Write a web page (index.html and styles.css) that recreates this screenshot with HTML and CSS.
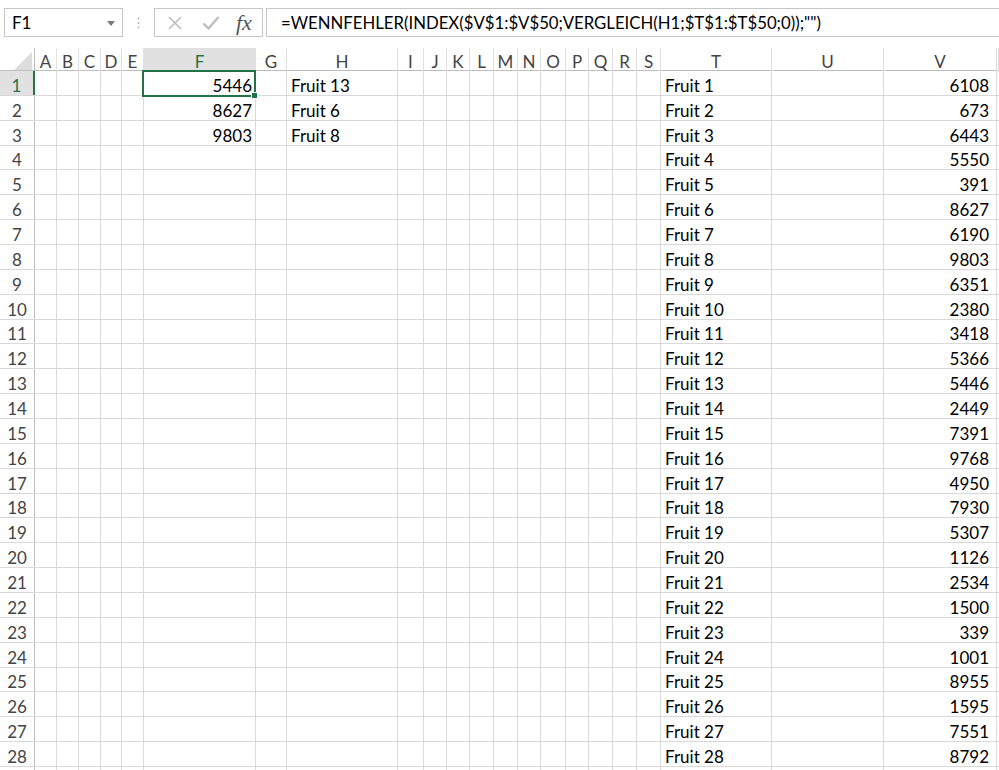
FILE: index.html
```html
<!DOCTYPE html>
<html lang="de">
<head>
<meta charset="utf-8">
<title>Excel</title>
<link rel="stylesheet" href="styles.css">
</head>
<body>
<div class="toolbar">
  <div class="namebox"><span class="nb-text">F1</span><svg class="nb-arrow" width="8" height="5" viewBox="0 0 8 5"><path d="M0 0h8L4 5z" fill="#7a7a7a"/></svg></div>
  <svg class="vdots" width="3" height="12" viewBox="0 0 3 12"><circle cx="1.5" cy="1.5" r="1" fill="#b0b0b0"/><circle cx="1.5" cy="6" r="1" fill="#b0b0b0"/><circle cx="1.5" cy="10.5" r="1" fill="#b0b0b0"/></svg>
  <div class="fxgroup">
    <svg class="ico" width="16" height="16" viewBox="0 0 16 16"><path d="M2 2L14 14M14 2L2 14" stroke="#bdbdbd" stroke-width="1.6" fill="none"/></svg>
    <svg class="ico" width="18" height="16" viewBox="0 0 18 16"><path d="M1.5 8.5L6.5 13.5L16.5 2" stroke="#bdbdbd" stroke-width="2.4" fill="none"/></svg>
    <span class="fx">fx</span>
  </div>
  <div class="formula">=WENNFEHLER(INDEX($V$1:$V$50;VERGLEICH(H1;$T$1:$T$50;0));"")</div>
</div>
<div class="sheet">
  <div class="hdr">
    <span class="corner"><svg width="18" height="18" viewBox="0 0 18 18"><path d="M18 0V18H0z" fill="#dcdcdc"/></svg></span>
    <span>A</span><span>B</span><span>C</span><span>D</span><span>E</span><span class="sel">F</span><span>G</span><span>H</span><span>I</span><span>J</span><span>K</span><span>L</span><span>M</span><span>N</span><span>O</span><span>P</span><span>Q</span><span>R</span><span>S</span><span>T</span><span>U</span><span>V</span><span></span>
  </div>
  <div class="row"><b class="sel">1</b><span></span><span></span><span></span><span></span><span></span><span class="num active">5446</span><span></span><span>Fruit 13</span><span></span><span></span><span></span><span></span><span></span><span></span><span></span><span></span><span></span><span></span><span></span><span>Fruit 1</span><span></span><span class="num v">6108</span><span></span></div>
  <div class="row"><b>2</b><span></span><span></span><span></span><span></span><span></span><span class="num">8627</span><span></span><span>Fruit 6</span><span></span><span></span><span></span><span></span><span></span><span></span><span></span><span></span><span></span><span></span><span></span><span>Fruit 2</span><span></span><span class="num v">673</span><span></span></div>
  <div class="row"><b>3</b><span></span><span></span><span></span><span></span><span></span><span class="num">9803</span><span></span><span>Fruit 8</span><span></span><span></span><span></span><span></span><span></span><span></span><span></span><span></span><span></span><span></span><span></span><span>Fruit 3</span><span></span><span class="num v">6443</span><span></span></div>
  <div class="row"><b>4</b><span></span><span></span><span></span><span></span><span></span><span></span><span></span><span></span><span></span><span></span><span></span><span></span><span></span><span></span><span></span><span></span><span></span><span></span><span></span><span>Fruit 4</span><span></span><span class="num v">5550</span><span></span></div>
  <div class="row"><b>5</b><span></span><span></span><span></span><span></span><span></span><span></span><span></span><span></span><span></span><span></span><span></span><span></span><span></span><span></span><span></span><span></span><span></span><span></span><span></span><span>Fruit 5</span><span></span><span class="num v">391</span><span></span></div>
  <div class="row"><b>6</b><span></span><span></span><span></span><span></span><span></span><span></span><span></span><span></span><span></span><span></span><span></span><span></span><span></span><span></span><span></span><span></span><span></span><span></span><span></span><span>Fruit 6</span><span></span><span class="num v">8627</span><span></span></div>
  <div class="row"><b>7</b><span></span><span></span><span></span><span></span><span></span><span></span><span></span><span></span><span></span><span></span><span></span><span></span><span></span><span></span><span></span><span></span><span></span><span></span><span></span><span>Fruit 7</span><span></span><span class="num v">6190</span><span></span></div>
  <div class="row"><b>8</b><span></span><span></span><span></span><span></span><span></span><span></span><span></span><span></span><span></span><span></span><span></span><span></span><span></span><span></span><span></span><span></span><span></span><span></span><span></span><span>Fruit 8</span><span></span><span class="num v">9803</span><span></span></div>
  <div class="row"><b>9</b><span></span><span></span><span></span><span></span><span></span><span></span><span></span><span></span><span></span><span></span><span></span><span></span><span></span><span></span><span></span><span></span><span></span><span></span><span></span><span>Fruit 9</span><span></span><span class="num v">6351</span><span></span></div>
  <div class="row"><b>10</b><span></span><span></span><span></span><span></span><span></span><span></span><span></span><span></span><span></span><span></span><span></span><span></span><span></span><span></span><span></span><span></span><span></span><span></span><span></span><span>Fruit 10</span><span></span><span class="num v">2380</span><span></span></div>
  <div class="row"><b>11</b><span></span><span></span><span></span><span></span><span></span><span></span><span></span><span></span><span></span><span></span><span></span><span></span><span></span><span></span><span></span><span></span><span></span><span></span><span></span><span>Fruit 11</span><span></span><span class="num v">3418</span><span></span></div>
  <div class="row"><b>12</b><span></span><span></span><span></span><span></span><span></span><span></span><span></span><span></span><span></span><span></span><span></span><span></span><span></span><span></span><span></span><span></span><span></span><span></span><span></span><span>Fruit 12</span><span></span><span class="num v">5366</span><span></span></div>
  <div class="row"><b>13</b><span></span><span></span><span></span><span></span><span></span><span></span><span></span><span></span><span></span><span></span><span></span><span></span><span></span><span></span><span></span><span></span><span></span><span></span><span></span><span>Fruit 13</span><span></span><span class="num v">5446</span><span></span></div>
  <div class="row"><b>14</b><span></span><span></span><span></span><span></span><span></span><span></span><span></span><span></span><span></span><span></span><span></span><span></span><span></span><span></span><span></span><span></span><span></span><span></span><span></span><span>Fruit 14</span><span></span><span class="num v">2449</span><span></span></div>
  <div class="row"><b>15</b><span></span><span></span><span></span><span></span><span></span><span></span><span></span><span></span><span></span><span></span><span></span><span></span><span></span><span></span><span></span><span></span><span></span><span></span><span></span><span>Fruit 15</span><span></span><span class="num v">7391</span><span></span></div>
  <div class="row"><b>16</b><span></span><span></span><span></span><span></span><span></span><span></span><span></span><span></span><span></span><span></span><span></span><span></span><span></span><span></span><span></span><span></span><span></span><span></span><span></span><span>Fruit 16</span><span></span><span class="num v">9768</span><span></span></div>
  <div class="row"><b>17</b><span></span><span></span><span></span><span></span><span></span><span></span><span></span><span></span><span></span><span></span><span></span><span></span><span></span><span></span><span></span><span></span><span></span><span></span><span></span><span>Fruit 17</span><span></span><span class="num v">4950</span><span></span></div>
  <div class="row"><b>18</b><span></span><span></span><span></span><span></span><span></span><span></span><span></span><span></span><span></span><span></span><span></span><span></span><span></span><span></span><span></span><span></span><span></span><span></span><span></span><span>Fruit 18</span><span></span><span class="num v">7930</span><span></span></div>
  <div class="row"><b>19</b><span></span><span></span><span></span><span></span><span></span><span></span><span></span><span></span><span></span><span></span><span></span><span></span><span></span><span></span><span></span><span></span><span></span><span></span><span></span><span>Fruit 19</span><span></span><span class="num v">5307</span><span></span></div>
  <div class="row"><b>20</b><span></span><span></span><span></span><span></span><span></span><span></span><span></span><span></span><span></span><span></span><span></span><span></span><span></span><span></span><span></span><span></span><span></span><span></span><span></span><span>Fruit 20</span><span></span><span class="num v">1126</span><span></span></div>
  <div class="row"><b>21</b><span></span><span></span><span></span><span></span><span></span><span></span><span></span><span></span><span></span><span></span><span></span><span></span><span></span><span></span><span></span><span></span><span></span><span></span><span></span><span>Fruit 21</span><span></span><span class="num v">2534</span><span></span></div>
  <div class="row"><b>22</b><span></span><span></span><span></span><span></span><span></span><span></span><span></span><span></span><span></span><span></span><span></span><span></span><span></span><span></span><span></span><span></span><span></span><span></span><span></span><span>Fruit 22</span><span></span><span class="num v">1500</span><span></span></div>
  <div class="row"><b>23</b><span></span><span></span><span></span><span></span><span></span><span></span><span></span><span></span><span></span><span></span><span></span><span></span><span></span><span></span><span></span><span></span><span></span><span></span><span></span><span>Fruit 23</span><span></span><span class="num v">339</span><span></span></div>
  <div class="row"><b>24</b><span></span><span></span><span></span><span></span><span></span><span></span><span></span><span></span><span></span><span></span><span></span><span></span><span></span><span></span><span></span><span></span><span></span><span></span><span></span><span>Fruit 24</span><span></span><span class="num v">1001</span><span></span></div>
  <div class="row"><b>25</b><span></span><span></span><span></span><span></span><span></span><span></span><span></span><span></span><span></span><span></span><span></span><span></span><span></span><span></span><span></span><span></span><span></span><span></span><span></span><span>Fruit 25</span><span></span><span class="num v">8955</span><span></span></div>
  <div class="row"><b>26</b><span></span><span></span><span></span><span></span><span></span><span></span><span></span><span></span><span></span><span></span><span></span><span></span><span></span><span></span><span></span><span></span><span></span><span></span><span></span><span>Fruit 26</span><span></span><span class="num v">1595</span><span></span></div>
  <div class="row"><b>27</b><span></span><span></span><span></span><span></span><span></span><span></span><span></span><span></span><span></span><span></span><span></span><span></span><span></span><span></span><span></span><span></span><span></span><span></span><span></span><span>Fruit 27</span><span></span><span class="num v">7551</span><span></span></div>
  <div class="row"><b>28</b><span></span><span></span><span></span><span></span><span></span><span></span><span></span><span></span><span></span><span></span><span></span><span></span><span></span><span></span><span></span><span></span><span></span><span></span><span></span><span>Fruit 28</span><span></span><span class="num v">8792</span><span></span></div>
  <div class="row"><b></b><span></span><span></span><span></span><span></span><span></span><span></span><span></span><span></span><span></span><span></span><span></span><span></span><span></span><span></span><span></span><span></span><span></span><span></span><span></span><span></span><span></span><span></span><span></span></div>
</div>
</body>
</html>
```
FILE: styles.css
```css
:root {
  --cols: 35px 22px 22px 22px 21px 22px 112px 31px 111px 26px 23px 23px 24px 24px 23px 25px 23px 24px 24px 24px 111px 112px 113px 1fr;
  --grid: #d9d9d9;
  --green: #217346;
}
html, body {
  margin: 0;
  padding: 0;
}
body {
  width: 999px;
  height: 770px;
  overflow: hidden;
  background: #fff;
  font-family: Lato, "Liberation Sans", sans-serif;
  color: #000;
}
.toolbar {
  height: 48px;
  box-sizing: border-box;
  padding: 8px 0 11px 4px;
  display: flex;
  align-items: stretch;
  overflow: hidden;
}
.namebox {
  width: 119px;
  box-sizing: border-box;
  border: 1px solid #c6c6c6;
  display: flex;
  align-items: center;
  justify-content: space-between;
  padding: 0 7px 0 7px;
  font-size: 17px;
}
.nb-arrow {
  margin-top: 1px;
}
.vdots {
  align-self: center;
  margin: 0 14px 0 14px;
}
.fxgroup {
  width: 109px;
  box-sizing: border-box;
  border: 1px solid #c6c6c6;
  display: flex;
  align-items: center;
  padding: 0 0 0 12px;
  gap: 19px;
}
.fx {
  font-family: "Liberation Serif", serif;
  font-style: italic;
  font-size: 22px;
  color: #555;
  margin-left: -3px;
}
.formula {
  flex: 1;
  min-width: 0;
  margin-left: 3px;
  border: 1px solid #c6c6c6;
  border-right: none;
  display: flex;
  align-items: center;
  padding-left: 14px;
  font-size: 16.75px;
  white-space: nowrap;
  overflow: hidden;
}
.sheet {
  width: 999px;
  overflow: hidden;
}
.hdr, .row {
  display: grid;
  grid-template-columns: var(--cols);
}
.hdr {
  height: 23px;
  box-sizing: border-box;
  border-bottom: 1px solid #bfbfbf;
}
.hdr span {
  border-right: 1px solid #e0e0e0;
  display: flex;
  align-items: center;
  justify-content: center;
  font-size: 17px;
  color: #444;
  padding-top: 3px;
}
.hdr .corner {
  border-right: 1px solid #bfbfbf;
  align-items: flex-end;
  justify-content: flex-end;
  padding: 0 2px 2px 0;
}
.hdr .sel {
  background: #e1e1e1;
  color: var(--green);
}
.row {
  height: 24.87px;
  box-sizing: border-box;
  border-bottom: 1px solid var(--grid);
}
.row span, .row b {
  border-right: 1px solid var(--grid);
  display: flex;
  align-items: flex-end;
  padding: 0 3px 0 4px;
  font-size: 17px;
  line-height: 18px;
  white-space: nowrap;
  overflow: visible;
}
.row b {
  font-weight: normal;
  justify-content: center;
  padding: 0;
  color: #444;
  border-right-color: #bfbfbf;
}
.row b.sel {
  background: #e1e1e1;
  color: var(--green);
  border-right: 2px solid var(--green);
}
.row .num {
  justify-content: flex-end;
}
.row .v {
  padding-right: 7px;
}
.row .active {
  position: relative;
}
.row .active::after {
  content: "";
  position: absolute;
  left: -2px;
  top: -1px;
  right: -1px;
  bottom: -2px;
  border: 2px solid var(--green);
}
.row .active::before {
  content: "";
  position: absolute;
  right: -3px;
  bottom: -4px;
  width: 5px;
  height: 5px;
  background: var(--green);
  border: 1px solid #fff;
  z-index: 2;
}
```
